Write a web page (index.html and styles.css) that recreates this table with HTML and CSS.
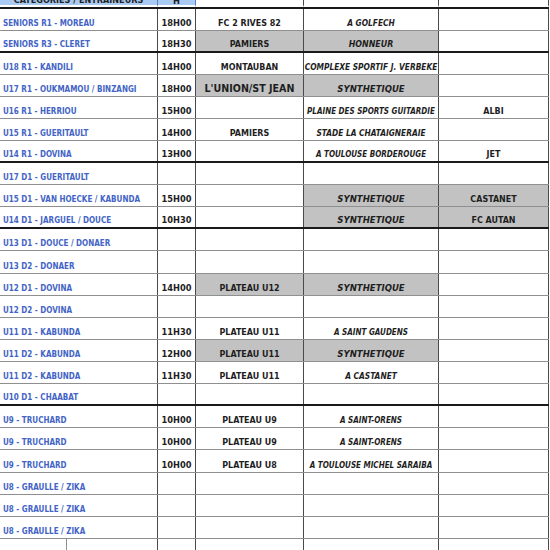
FILE: index.html
```html
<!DOCTYPE html>
<html lang="fr">
<head>
<meta charset="utf-8">
<title>Planning</title>
<link rel="stylesheet" href="styles.css">
</head>
<body>
<div class="sheet">
  <div class="row head">
    <div class="c c1 hb"><span>CATEGORIES / ENTRAINEURS</span></div>
    <div class="c c2 hb"><span>H</span></div>
    <div class="c c3"></div>
    <div class="c c4"></div>
    <div class="c c5"></div>
  </div>

  <div class="row"><div class="c c1">SENIORS R1 - MOREAU</div><div class="c c2">18H00</div><div class="c c3">FC 2 RIVES 82</div><div class="c c4 md">A GOLFECH</div><div class="c c5"></div></div>
  <div class="row sep"><div class="c c1">SENIORS R3 - CLERET</div><div class="c c2">18H30</div><div class="c c3 g">PAMIERS</div><div class="c c4 g lg">HONNEUR</div><div class="c c5"></div></div>

  <div class="row"><div class="c c1">U18 R1 - KANDILI</div><div class="c c2">14H00</div><div class="c c3">MONTAUBAN</div><div class="c c4 md">COMPLEXE SPORTIF J. VERBEKE</div><div class="c c5"></div></div>
  <div class="row"><div class="c c1">U17 R1 - OUKMAMOU / BINZANGI</div><div class="c c2">18H00</div><div class="c c3 g xl">L'UNION/ST JEAN</div><div class="c c4 g xl">SYNTHETIQUE</div><div class="c c5"></div></div>
  <div class="row"><div class="c c1">U16 R1 - HERRIOU</div><div class="c c2">15H00</div><div class="c c3"></div><div class="c c4">PLAINE DES SPORTS GUITARDIE</div><div class="c c5">ALBI</div></div>
  <div class="row"><div class="c c1">U15 R1 - GUERITAULT</div><div class="c c2">14H00</div><div class="c c3">PAMIERS</div><div class="c c4 md">STADE LA CHATAIGNERAIE</div><div class="c c5"></div></div>
  <div class="row sep"><div class="c c1">U14 R1 - DOVINA</div><div class="c c2">13H00</div><div class="c c3"></div><div class="c c4">A TOULOUSE BORDEROUGE</div><div class="c c5">JET</div></div>

  <div class="row"><div class="c c1">U17 D1 - GUERITAULT</div><div class="c c2"></div><div class="c c3"></div><div class="c c4"></div><div class="c c5"></div></div>
  <div class="row"><div class="c c1">U15 D1 - VAN HOECKE / KABUNDA</div><div class="c c2">15H00</div><div class="c c3"></div><div class="c c4 g xl">SYNTHETIQUE</div><div class="c c5 g">CASTANET</div></div>
  <div class="row sep"><div class="c c1">U14 D1 - JARGUEL / DOUCE</div><div class="c c2">10H30</div><div class="c c3"></div><div class="c c4 g xl">SYNTHETIQUE</div><div class="c c5 g">FC AUTAN</div></div>

  <div class="row"><div class="c c1">U13 D1 - DOUCE / DONAER</div><div class="c c2"></div><div class="c c3"></div><div class="c c4"></div><div class="c c5"></div></div>
  <div class="row tall"><div class="c c1">U13 D2 - DONAER</div><div class="c c2"></div><div class="c c3"></div><div class="c c4"></div><div class="c c5"></div></div>
  <div class="row"><div class="c c1">U12 D1 - DOVINA</div><div class="c c2">14H00</div><div class="c c3 g">PLATEAU U12</div><div class="c c4 g xl">SYNTHETIQUE</div><div class="c c5"></div></div>
  <div class="row"><div class="c c1">U12 D2 - DOVINA</div><div class="c c2"></div><div class="c c3"></div><div class="c c4"></div><div class="c c5"></div></div>
  <div class="row"><div class="c c1">U11 D1 - KABUNDA</div><div class="c c2">11H30</div><div class="c c3">PLATEAU U11</div><div class="c c4">A SAINT GAUDENS</div><div class="c c5"></div></div>
  <div class="row"><div class="c c1">U11 D2 - KABUNDA</div><div class="c c2">12H00</div><div class="c c3 g">PLATEAU U11</div><div class="c c4 g xl">SYNTHETIQUE</div><div class="c c5"></div></div>
  <div class="row"><div class="c c1">U11 D2 - KABUNDA</div><div class="c c2">11H30</div><div class="c c3">PLATEAU U11</div><div class="c c4 md">A CASTANET</div><div class="c c5"></div></div>
  <div class="row sep"><div class="c c1">U10 D1 - CHAABAT</div><div class="c c2"></div><div class="c c3"></div><div class="c c4"></div><div class="c c5"></div></div>

  <div class="row"><div class="c c1">U9 - TRUCHARD</div><div class="c c2">10H00</div><div class="c c3">PLATEAU U9</div><div class="c c4">A SAINT-ORENS</div><div class="c c5"></div></div>
  <div class="row"><div class="c c1">U9 - TRUCHARD</div><div class="c c2">10H00</div><div class="c c3">PLATEAU U9</div><div class="c c4">A SAINT-ORENS</div><div class="c c5"></div></div>
  <div class="row tall"><div class="c c1">U9 - TRUCHARD</div><div class="c c2">10H00</div><div class="c c3">PLATEAU U8</div><div class="c c4">A TOULOUSE MICHEL SARAIBA</div><div class="c c5"></div></div>
  <div class="row"><div class="c c1">U8 - GRAULLE / ZIKA</div><div class="c c2"></div><div class="c c3"></div><div class="c c4"></div><div class="c c5"></div></div>
  <div class="row"><div class="c c1">U8 - GRAULLE / ZIKA</div><div class="c c2"></div><div class="c c3"></div><div class="c c4"></div><div class="c c5"></div></div>
  <div class="row"><div class="c c1">U8 - GRAULLE / ZIKA</div><div class="c c2"></div><div class="c c3"></div><div class="c c4"></div><div class="c c5"></div></div>
  <div class="row"><div class="c c1 split"><div class="part"></div></div><div class="c c2"></div><div class="c c3"></div><div class="c c4"></div><div class="c c5"></div></div>
</div>
</body>
</html>
```

FILE: styles.css
```css
html, body {
  margin: 0;
  padding: 0;
  background: #ffffff;
}

body {
  width: 550px;
  height: 550px;
  overflow: hidden;
  font-family: "DejaVu Sans Condensed", "DejaVu Sans", sans-serif;
  font-stretch: condensed;
  font-weight: bold;
}

.sheet {
  display: flex;
  flex-direction: column;
  width: 549px;
}

.row {
  display: grid;
  grid-template-columns: 158px 38px 108px 135px 110px;
  height: 22px;
  flex-shrink: 0;
  box-sizing: border-box;
  border-bottom: 1px solid #8f8f8f;
}

.row.tall {
  height: 23px;
}

.row.sep {
  border-bottom: 2px solid #1a1a1a;
}

.c {
  box-sizing: border-box;
  border-right: 1px solid #4a4a4a;
  display: flex;
  align-items: flex-end;
  justify-content: center;
  padding-bottom: 2px;
  white-space: nowrap;
  overflow: hidden;
  color: #1e1e1e;
}

.c1 {
  justify-content: flex-start;
  padding-left: 3px;
  color: #4364c6;
  font-size: 8px;
}

.c2 {
  font-size: 9.2px;
}

.c3, .c5 {
  font-size: 8.9px;
}

.c3.xl {
  font-size: 10.6px;
}

.c4 {
  font-style: italic;
  font-size: 8px;
}

.c4.md {
  font-size: 8.3px;
}

.c4.lg {
  font-size: 8.8px;
}

.c4.xl {
  font-size: 9.5px;
}

.g {
  background: #c2c2c2;
}

.row.head {
  height: 9px;
  border-bottom: 2px solid #1a1a1a;
}

.head .c {
  padding-bottom: 0;
  border-bottom: 2px solid #ffffff;
}

.head .hb {
  background: #a9caf2;
  border-right-color: #5b84c4;
  color: #1f1f1f;
}

.head .c1 {
  justify-content: center;
  padding-left: 0;
  color: #1f1f1f;
  font-size: 9px;
}

.head .c span {
  display: block;
  line-height: 9px;
}

.split {
  padding: 0;
  justify-content: flex-start;
  align-items: stretch;
}

.split .part {
  width: 66px;
  border-right: 1px solid #8f8f8f;
}
```
